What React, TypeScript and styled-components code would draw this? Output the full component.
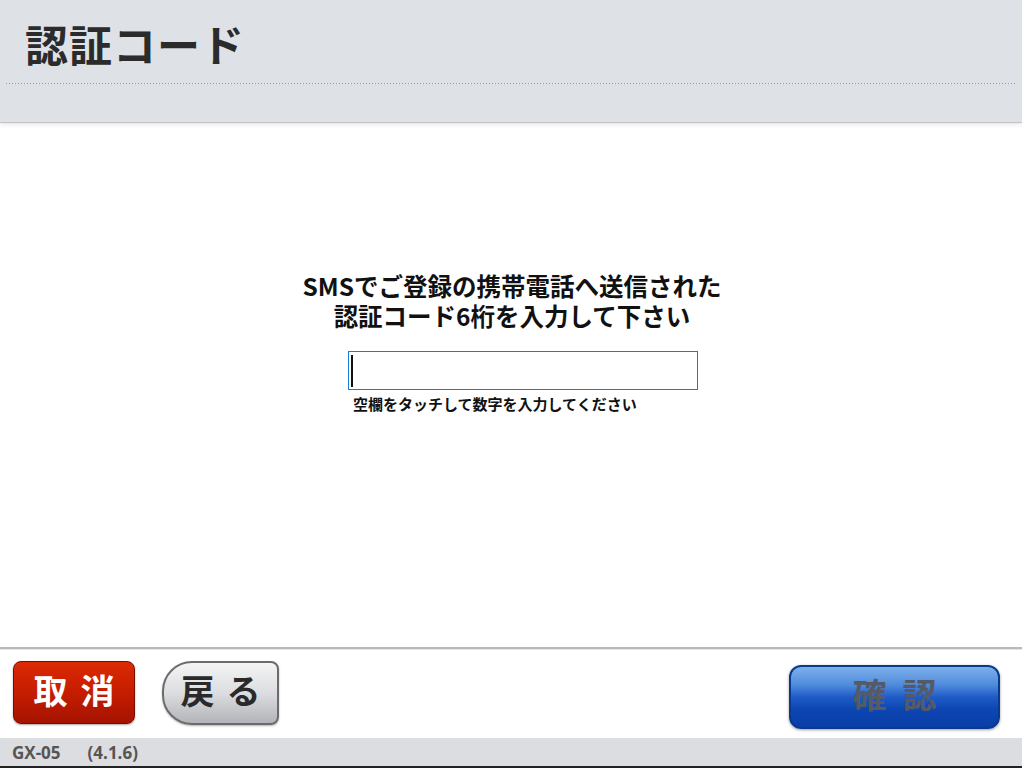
import React from "react";
import styled, { createGlobalStyle } from "styled-components";

const Global = createGlobalStyle`
  html, body { margin: 0; padding: 0; }
  body {
    font-family: "Noto Sans CJK JP", "Noto Sans", sans-serif;
    background: #ffffff;
  }
`;

const Page = styled.div`
  width: 1022px;
  height: 768px;
  display: flex;
  flex-direction: column;
  overflow: hidden;
  background: #ffffff;
`;

const Header = styled.header`
  height: 122px;
  flex: none;
  background: #dee1e5;
  box-shadow: 0 1px 1px rgba(0, 0, 0, 0.18), 0 3px 5px rgba(0, 0, 0, 0.08);
  position: relative;
  z-index: 1;
  display: flex;
  flex-direction: column;
`;

const Title = styled.h1`
  margin: 22px 0 0 25px;
  font-size: 43px;
  line-height: 43px;
  font-weight: 700;
  color: #2b2b2b;
  letter-spacing: 1px;
`;

const DottedRule = styled.div`
  margin: 18px 7px 0 6px;
  height: 1px;
  background-image: linear-gradient(to right, #9a9a9a 50%, transparent 50%);
  background-size: 3px 1px;
`;

const Body = styled.main`
  flex: 1;
  display: flex;
  flex-direction: column;
  align-items: center;
  padding-top: 150px;
`;

const Prompt = styled.div`
  display: flex;
  flex-direction: column;
  align-items: center;
  gap: 3px;
  padding-left: 2px;
`;

const PromptLine = styled.p`
  margin: 0;
  font-size: 24.5px;
  line-height: 27px;
  font-weight: 700;
  color: #111;
  text-align: center;
`;

const Field = styled.div`
  margin: 22px 0 0 24px;
  width: 350px;
  display: flex;
  flex-direction: column;
`;

const InputBox = styled.div`
  box-sizing: border-box;
  height: 39px;
  border: 1px solid #1c7ad2;
  display: flex;
  align-items: center;
  padding-left: 2px;
`;

const Caret = styled.span`
  width: 2px;
  height: 32px;
  background: #111;
`;

const Hint = styled.div`
  margin: 6px 0 0 5px;
  font-size: 15px;
  line-height: 15px;
  font-weight: 700;
  color: #111;
`;

const Footer = styled.footer`
  flex: none;
  height: 91px;
  border-top: 2px solid #b9b9b9;
  box-shadow: inset 0 1px 0 #e6e6e6;
  display: flex;
  align-items: flex-start;
  padding: 12px 22px 0 13px;
  box-sizing: border-box;
  gap: 27px;
`;

const BaseButton = styled.button`
  font-family: "Noto Sans CJK JP", sans-serif;
  font-weight: 700;
  font-size: 34px;
  line-height: 34px;
  letter-spacing: 13px;
  padding: 0 0 6px 13px;
  display: flex;
  align-items: center;
  justify-content: center;
  box-sizing: border-box;
  cursor: pointer;
`;

const CancelButton = styled(BaseButton)`
  width: 122px;
  height: 63px;
  border-radius: 8px;
  border: 1px solid #7a0c00;
  color: #ffffff;
  background: linear-gradient(to bottom, #dc2a05 0%, #c81e00 45%, #a51300 100%);
  box-shadow: 0 1px 2px rgba(0, 0, 0, 0.35);
`;

const BackButton = styled(BaseButton)`
  width: 117px;
  height: 64px;
  border-radius: 30px 8px 8px 30px;
  border: 2px solid #6b6b6b;
  color: #2a2a2a;
  background: linear-gradient(to bottom, #f4f4f5 0%, #dcdde0 50%, #b3b4b9 100%);
  box-shadow: 0 1px 2px rgba(0, 0, 0, 0.3);
  letter-spacing: 12px;
  padding-left: 12px;
`;

const Spacer = styled.div`
  flex: 1;
`;

const ConfirmButton = styled(BaseButton)`
  margin-top: 4px;
  width: 211px;
  height: 64px;
  border-radius: 12px;
  border: 2px solid #0a3a8e;
  color: #555a66;
  background: linear-gradient(
    to bottom,
    #7eb0ea 0%,
    #4f8bdc 30%,
    #1f5cc6 50%,
    #0c46b4 70%,
    #0a3ea6 100%
  );
  box-shadow: 0 1px 3px rgba(0, 0, 0, 0.4);
  letter-spacing: 16px;
  padding-left: 16px;
`;

const StatusBar = styled.div`
  flex: none;
  height: 28px;
  background: #dcdde1;
  border-bottom: 2px solid #222;
  display: flex;
  align-items: center;
  padding-left: 12px;
  gap: 27px;
  font-family: "Open Sans", "Noto Sans", sans-serif;
  font-size: 17px;
  font-weight: 700;
  color: #555;
`;

export default function App() {
  return (
    <>
      <Global />
      <Page>
        <Header>
          <Title>認証コード</Title>
          <DottedRule />
        </Header>
        <Body>
          <Prompt>
            <PromptLine>SMSでご登録の携帯電話へ送信された</PromptLine>
            <PromptLine>認証コード6桁を入力して下さい</PromptLine>
          </Prompt>
          <Field>
            <InputBox>
              <Caret />
            </InputBox>
            <Hint>空欄をタッチして数字を入力してください</Hint>
          </Field>
        </Body>
        <Footer>
          <CancelButton>取消</CancelButton>
          <BackButton>戻る</BackButton>
          <Spacer />
          <ConfirmButton>確認</ConfirmButton>
        </Footer>
        <StatusBar>
          <span>GX-05</span>
          <span>(4.1.6)</span>
        </StatusBar>
      </Page>
    </>
  );
}
